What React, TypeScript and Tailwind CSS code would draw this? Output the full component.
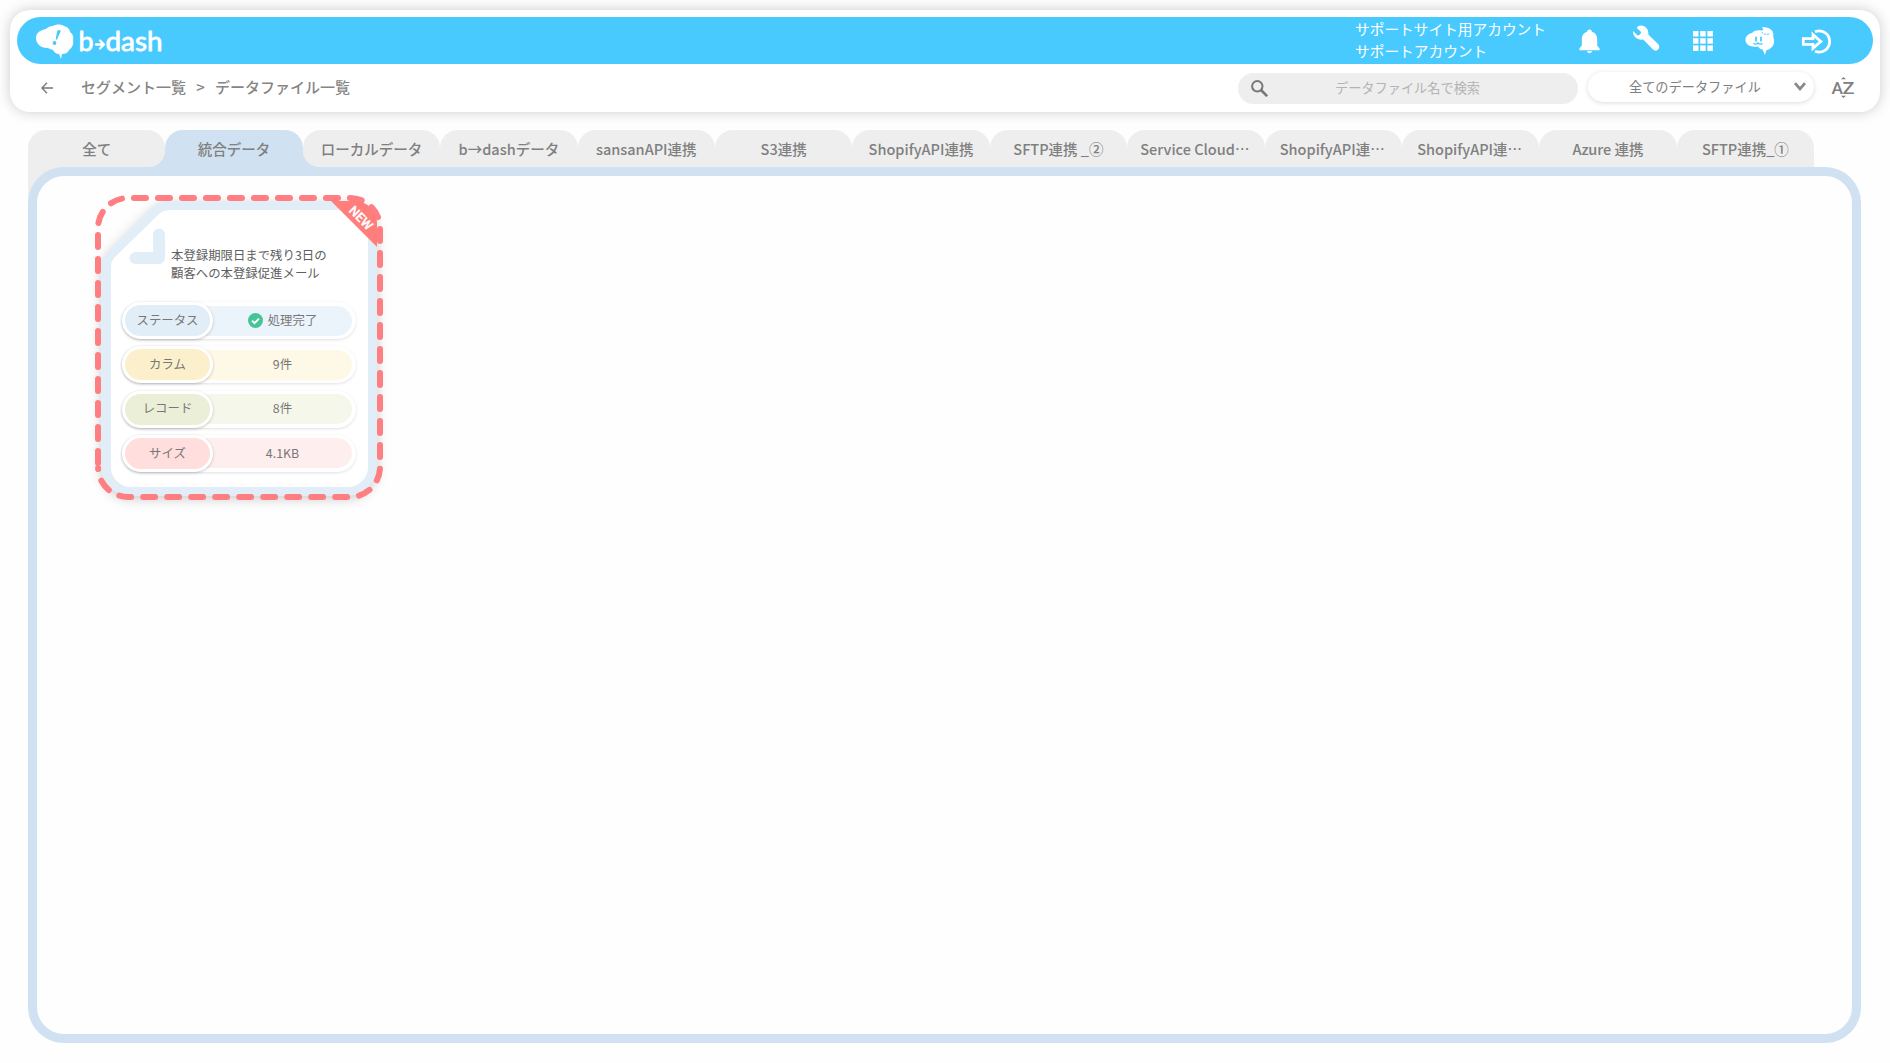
import { ReactNode } from 'react';

const tabs = [
  '全て',
  '統合データ',
  'ローカルデータ',
  'b→dashデータ',
  'sansanAPI連携',
  'S3連携',
  'ShopifyAPI連携',
  'SFTP連携 _②',
  'Service Cloud…',
  'ShopifyAPI連…',
  'ShopifyAPI連…',
  'Azure 連携',
  'SFTP連携_①',
];

const ACTIVE_TAB = 1;

const rows = [
  { label: 'ステータス', value: '処理完了', labelBg: 'bg-[#e1eef8]', valueBg: 'bg-[#ecf4fb]', done: true },
  { label: 'カラム', value: '9件', labelBg: 'bg-[#fcf0cc]', valueBg: 'bg-[#fef8e6]' },
  { label: 'レコード', value: '8件', labelBg: 'bg-[#ebefd8]', valueBg: 'bg-[#f6f7eb]' },
  { label: 'サイズ', value: '4.1KB', labelBg: 'bg-[#ffdedd]', valueBg: 'bg-[#ffeeee]' },
];

function Logo() {
  return (
    <svg width="130" height="40" viewBox="34 20 130 40" fill="#fff">
      <path d="M36 38c0-5 4-8 10-9 2-2 4-3 7-3 3-2 8-2 11 0 4 1 6 4 6 6 3 2 4 5 3 8 1 4-1 8-4 10-1 3-4 4-7 4l-1 5-2-5c-3 0-5-2-6-4-3-1-4-2-6-2-6 0-11-4-11-10z" />
      <path d="M57.200 31q3.300-2 3.300.5l-3.500 8q-1 .8-1.300-.5z" fill="#48caff" />
      <circle cx="54.500" cy="43" r="1.900" fill="#48caff" />
      <g fontFamily="Lato, sans-serif" fontSize="27" stroke="#fff" strokeWidth=".8" strokeLinejoin="round">
        <text x="78.500" y="50.500" textLength="15" lengthAdjust="spacingAndGlyphs">b</text>
        <text x="105.500" y="50.500" textLength="57" lengthAdjust="spacingAndGlyphs">dash</text>
      </g>
      <path d="M96 44.500h7.500M100 40.500l4 4-4 4" fill="none" stroke="#fff" strokeWidth="2.300" strokeLinecap="round" strokeLinejoin="round" />
    </svg>
  );
}

function HeaderIcons() {
  return (
    <svg width="256" height="40" viewBox="1578 20 256 40" fill="#fff">
      {/* bell */}
      <path d="M1589.500 29.500c1.500 0 2.300.9 2.300 2.200 3.600 1 5.400 3.800 5.400 7.500v6.500l2.300 2.600v2h-20v-2l2.300-2.600v-6.500c0-3.700 1.800-6.500 5.400-7.500 0-1.300.8-2.200 2.300-2.200zM1587 51h5q-.6 2.200-2.500 2.200t-2.500-2.200z" />
      {/* wrench */}
      <path d="M1641 25.500c4.500.2 8 4 7.300 9l10 9.800c3 3.500-1.600 8.500-5.300 5.300l-9.800-10c-5.500 1-10.500-3-10.200-8.600l4.300 4.200c1.500 1 4.500-2 3.500-3.500l-4-3.800c1-1.700 2.500-2.500 4.200-2.400z" />
      {/* app grid */}
      {[31, 38.2, 45.4].map((y) =>
        [1693, 1700.2, 1707.4].map((x) => <rect key={`${x}-${y}`} x={x} y={y} width="5.500" height="5.500" />)
      )}
      {/* mascot */}
      <path d="M1745.500 40c0-4 3-6.500 6.500-7 2-2.500 6-3 9-2.500q2-.5 2.500-.5l-1.500-3c4 0 8 1 10 3.500 2 2.500 1 5 1.500 7.500 1.500 4 0 9-4 11-1.200.8-1.800 1-3 1l-1.500 5-2.500-5.500c-2-.2-3.500-1.500-4.500-3-7 1-12.500-1.500-12.500-6.500z" />
      <path d="M1761.500 32c2 2.500 5.500 3 8.500 1.500" fill="none" stroke="#48caff" strokeWidth="1" strokeDasharray="2 1" />
      <path d="M1753.500 43.200q2.500 2.200 4.500-.4 2 2.600 4.500.4" fill="none" stroke="#48caff" strokeWidth="1.300" />
      <path d="M1756 37.300v3.400M1761 37.300v3.400" stroke="#48caff" strokeWidth="1.800" strokeLinecap="round" />
      {/* sign in */}
      <path d="M1815 31.700a10.600 10.600 0 1 1 0 19.600" fill="none" stroke="#fff" strokeWidth="2.800" />
      <path d="M1803.300 38.700h9.700v-4l7.800 6.800-7.800 6.800v-4h-9.700z" fill="none" stroke="#fff" strokeWidth="2.800" />
    </svg>
  );
}

function SortIcon() {
  return (
    <svg width="24" height="24" viewBox="1831 76 24 24" fill="#808080">
      <text x="1831.500" y="93.500" fontSize="17" fontFamily="Roboto, sans-serif" fontWeight="500" textLength="11.500" lengthAdjust="spacingAndGlyphs">A</text>
      <text x="1842.500" y="93.500" fontSize="17" fontFamily="Roboto, sans-serif" fontWeight="500" textLength="12" lengthAdjust="spacingAndGlyphs">Z</text>
      <path d="M1841 79.200l2.500-2.200 2.500 2.200zM1841 95.800l2.500 2.200 2.500-2.200z" />
    </svg>
  );
}

function Header() {
  return (
    <header className="mx-[10px] mt-[10px] h-[102px] rounded-[20px] bg-white px-[7px] pt-[7px] shadow-[0_0_14px_rgba(0,0,0,0.2)]">
      <div className="flex h-[47px] items-center rounded-full bg-[#48caff] pb-[1px] pl-[17px] pr-[39px]">
        <Logo />
        <div className="ml-auto w-[223px] whitespace-nowrap pb-[1px] text-[14.7px] leading-[22px] text-white">
          <p>サポートサイト用アカウント</p>
          <p>サポートアカウント</p>
        </div>
        <HeaderIcons />
      </div>
      <div className="flex h-[48px] items-center pl-[24px] pr-[18px]">
        <svg width="12" height="12" viewBox="0 0 12 12" fill="none" stroke="#777" strokeWidth="1.300">
          <path d="M12 6H1M6 .8L.9 6 6 11.200" />
        </svg>
        <nav className="ml-[28px] flex items-center pb-[1px] text-[15px] font-medium text-[#858585]">
          <span>セグメント一覧</span>
          <span className="w-[29px] text-center">&gt;</span>
          <span>データファイル一覧</span>
        </nav>
        <div className="ml-auto flex h-[31px] w-[340px] items-center rounded-full bg-[#eee] pl-[13px]">
          <svg width="17" height="17" viewBox="0 0 17 17" fill="none" stroke="#777" strokeWidth="2">
            <circle cx="6.300" cy="6.300" r="5.200" />
            <path d="M10 10l6.200 6.200" strokeWidth="2.600" />
          </svg>
          <span className="ml-[67px] text-[13.2px] text-[#b3b3b3]">データファイル名で検索</span>
        </div>
        <div className="ml-[10px] mt-[-3px] flex h-[30px] w-[226px] items-center rounded-full bg-white pl-[41px] pr-[8px] shadow-[0_1px_5px_rgba(0,0,0,0.14)]">
          <span className="text-[13.2px] text-[#808080]">全てのデータファイル</span>
          <svg className="ml-auto" width="12" height="9" viewBox="0 0 12 9" fill="none" stroke="#888" strokeWidth="2.700">
            <path d="M1 1.200l5 5.800 5-5.800" />
          </svg>
        </div>
        <span className="ml-[17px]">
          <SortIcon />
        </span>
      </div>
    </header>
  );
}

function Tab({ children, index }: { children: ReactNode; index: number }) {
  const active = index === ACTIVE_TAB;
  // gray behind inactive corners, blue where a neighbour curves into the active tab
  const corner =
    index === ACTIVE_TAB - 1 ? 'rounded-br-[16px]' : index === ACTIVE_TAB + 1 ? 'rounded-bl-[16px]' : '';
  return (
    <div className={`relative h-[37px] flex-1 ${index > ACTIVE_TAB + 1 ? 'bg-[linear-gradient(to_bottom,transparent_50%,#eee_50%)]' : ''}`}>
      {active && <span className="absolute -left-[16px] -right-[16px] bottom-0 h-[17px] bg-[#d0e2f1]" />}
      <div
        className={`relative z-10 flex h-full items-center justify-center whitespace-nowrap rounded-t-[18px] pt-[1px] text-[14.5px] font-medium text-[#808080] ${
          active ? 'bg-[#d0e2f1]' : 'bg-[#eee]'
        } ${corner}`}
      >
        {children}
      </div>
    </div>
  );
}

function TabLabel({ name }: { name: string }) {
  if (!name.endsWith('…')) return <>{name}</>;
  return (
    <span className="flex pr-[2px]">
      {name.slice(0, -1)}
      <span className="w-[14.500px]">…</span>
    </span>
  );
}

function DataCard() {
  return (
    <div className="relative h-[306px] w-[288px]">
      <svg className="absolute inset-0 overflow-visible" width="288" height="306" viewBox="95 195 288 306">
        <path
          d="M167 201H347a30 30 0 0 1 30 30V466a30 30 0 0 1-30 30H131a30 30 0 0 1-30-30V267q0-8 6-14L153 207q6-6 14-6z"
          fill="#e1eef8"
          className="[filter:drop-shadow(0_3px_6px_rgba(0,0,0,0.2))]"
        />
        <path d="M171 210H368V466a20 20 0 0 1-20 21H131a20 20 0 0 1-20-21V267q0-6 4-10L158 215q5-5 13-5z" fill="#fff" />
        <path d="M159 234.500V258H135.500" fill="none" stroke="#e1eef8" strokeWidth="12" strokeLinecap="round" strokeLinejoin="round" />
        <path d="M331 201H355a22 22 0 0 1 22 22V247z" fill="#ff7d7a" />
        <text x="361" y="222.500" transform="rotate(45 361 218)" textAnchor="middle" fill="#fff" fontFamily="Roboto, sans-serif" fontWeight="700" fontSize="13">
          NEW
        </text>
        <path
          d="M98 463V228a30 30 0 0 1 30-30H350a30 30 0 0 1 30 30V467a30 30 0 0 1-30 30H128a30 30 0 0 1-29.900-29"
          fill="none"
          stroke="#ff7e82"
          strokeWidth="6"
          strokeLinecap="round"
          strokeDasharray="12 12"
        />
      </svg>
      <div className="relative pl-[27px] pt-[51px] text-[12.4px] text-[#777]">
        <p className="whitespace-nowrap pl-[49px] leading-[18px] text-[#606060]">
          本登録期限日まで残り3日の
          <br />
          顧客への本登録促進メール
        </p>
        <div className="mt-[20px] flex flex-col gap-[7.300px]">
          {rows.map((row) => (
            <div key={row.label} className="flex h-[37px] w-[234px] items-center rounded-full bg-white shadow-[0_1px_3px_rgba(0,0,0,0.12)]">
              <div className={`z-10 flex h-[37px] w-[91px] items-center justify-center rounded-full border-[3px] border-white pb-[1px] shadow-[0_1px_3px_rgba(0,0,0,0.22)] ${row.labelBg}`}>
                {row.label}
              </div>
              <div className={`-ml-[20px] flex h-[30px] w-[159px] items-center justify-center gap-[5px] rounded-r-full pb-[1px] pl-[20px] ${row.valueBg}`}>
                {row.done && (
                  <svg width="15" height="15" viewBox="0 0 15 15">
                    <circle cx="7.500" cy="7.500" r="7.500" fill="#45c596" />
                    <path d="M4 7.600l2.500 2.500L11 5.600" fill="none" stroke="#fff" strokeWidth="2" />
                  </svg>
                )}
                {row.value}
              </div>
            </div>
          ))}
        </div>
      </div>
    </div>
  );
}

export default function App() {
  return (
    <div lang="ja" className="h-[1063px] w-[1890px] overflow-hidden bg-[#fefefe] font-['Noto_Sans_CJK_JP',sans-serif]">
      <div className="flex h-full flex-col">
        <Header />
        <main className="mt-[18px] flex flex-1 flex-col pb-[20px] pl-[28px] pr-[29px]">
          <div className="flex w-[1786px]">
            {tabs.map((tab, i) => (
              <Tab key={i} index={i}>
                <TabLabel name={tab} />
              </Tab>
            ))}
          </div>
          <div className="flex flex-1 bg-[linear-gradient(#eee,#eee)] bg-[length:40px_40px] bg-no-repeat">
            <div className="flex-1 rounded-[36px] border-[9px] border-[#d0e2f1] bg-[#fefefe] pl-[58px] pt-[19px]">
              <DataCard />
            </div>
          </div>
        </main>
      </div>
    </div>
  );
}
